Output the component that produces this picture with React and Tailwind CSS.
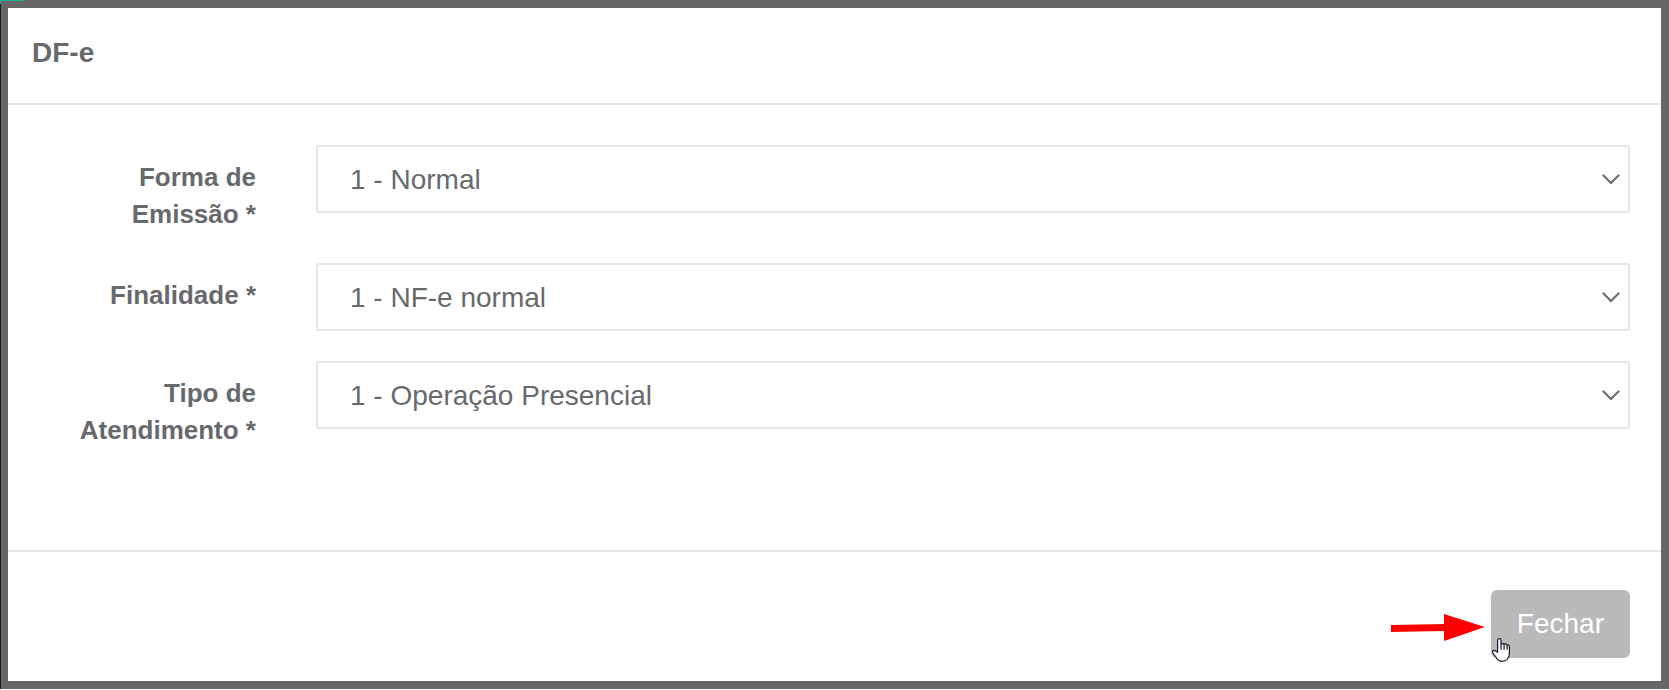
import React from "react";

const fields = [
  {
    id: "forma_emissao",
    label: "Forma de Emissão *",
    options: ["1 - Normal", "2 - Contingência"],
  },
  {
    id: "finalidade",
    label: "Finalidade *",
    options: ["1 - NF-e normal", "2 - NF-e complementar"],
  },
  {
    id: "tipo_atendimento",
    label: "Tipo de Atendimento *",
    options: ["1 - Operação Presencial", "2 - Operação pela Internet"],
  },
];

function SelectField({ id, label, options, value, onChange }) {
  return (
    <div className="flex items-start gap-15">
      <label
        htmlFor={id}
        className="w-[218px] shrink-0 pt-3.5 text-right text-[26px] leading-[37px] font-bold"
      >
        {label}
      </label>
      <div className="relative flex-1">
        <select
          id={id}
          name={id}
          value={value}
          onChange={onChange}
          className="block h-17 w-full appearance-none rounded-[2px] border-2 border-[#e5e6e7] bg-white pt-0.5 pr-12 pl-8 text-[28px]"
        >
          {options.map((option) => (
            <option key={option}>{option}</option>
          ))}
        </select>
        <svg
          className="pointer-events-none absolute top-7 right-[9px] h-3 w-5"
          viewBox="0 0 20 12"
          fill="none"
          stroke="currentColor"
          strokeWidth="2"
        >
          <path d="M1.8 1.8 10 10l8.2-8.2" />
        </svg>
      </div>
    </div>
  );
}

function Arrow() {
  return (
    <svg
      className="pointer-events-none absolute top-6 right-[145px] h-7 w-[94px]"
      viewBox="0 0 94 28"
      fill="#fe0000"
    >
      <path d="M0 11 53 10V0l41 13-41 14V17L0 18Z" />
    </svg>
  );
}

function HandCursor() {
  return (
    <svg
      className="pointer-events-none absolute top-12 left-0 h-6 w-5"
      viewBox="0 0 20 24"
      fill="white"
      stroke="#1a1a2e"
      strokeWidth="1.2"
      strokeLinejoin="round"
      strokeLinecap="round"
    >
      <path d="M6.6 14.4V2.3a1.7 1.7 0 0 1 3.4 0V6c1-.7 2.5-.5 3.1.4 1-.6 2.4-.3 3 .6 1.2-.4 2.3.3 2.3 1.5v6.6c0 5-3 8.3-7.6 8.3-2 0-3.2-.7-4.3-2L1.9 15c-.8-1.3-.3-2.7 1-2.7 1.5 0 2.4.8 3.7 2.1Z" />
      <path d="M10 6v5.2M13.1 6.4v4.8M16.1 7v4.2" />
    </svg>
  );
}

export default function App() {
  const [values, setValues] = React.useState({
    forma_emissao: "1 - Normal",
    finalidade: "1 - NF-e normal",
    tipo_atendimento: "1 - Operação Presencial",
  });

  function handleChange(e) {
    setValues((prev) => ({ ...prev, [e.target.name]: e.target.value }));
  }

  return (
    <div className="relative border-l border-[#131c2b] bg-[#666666] py-2 pr-2 pl-[7px] font-['Liberation_Sans',Arial,sans-serif] text-[#676a6c]">
      {/* corner of the page behind the backdrop */}
      <div className="absolute top-0 -left-px h-1 w-6 border-t border-l border-[#1ab394]" />
      <div role="dialog" aria-labelledby="title" className="bg-white">
        <header className="border-b-2 border-[#e5e5e5] px-6 pt-6 pb-[29px]">
          <h1 id="title" className="text-[28px] leading-[42px] font-bold">
            DF-e
          </h1>
        </header>

        <form className="flex flex-col gap-[30px] pt-10 pr-[31px] pb-[101px] pl-[30px]">
          {fields.map((field) => (
            <SelectField
              key={field.id}
              {...field}
              value={values[field.id]}
              onChange={handleChange}
            />
          ))}
        </form>

        <footer className="flex justify-end border-t-2 border-[#e5e5e5] pt-[38px] pr-[31px] pb-[23px]">
          <div className="relative">
            <Arrow />
            <button
              type="button"
              className="block h-17 cursor-pointer rounded-md bg-[#bababa] px-[26px] text-[28px] text-white"
            >
              Fechar
            </button>
            <HandCursor />
          </div>
        </footer>
      </div>
    </div>
  );
}
